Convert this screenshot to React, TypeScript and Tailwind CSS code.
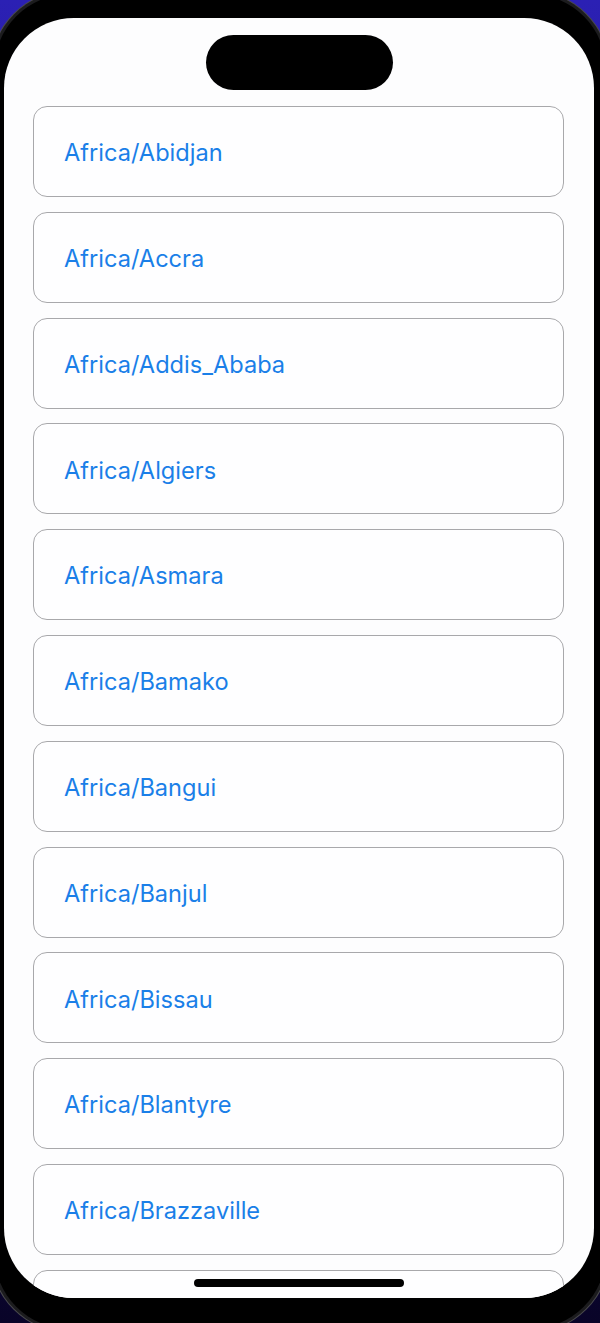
const zones = [
  "Africa/Abidjan",
  "Africa/Accra",
  "Africa/Addis_Ababa",
  "Africa/Algiers",
  "Africa/Asmara",
  "Africa/Bamako",
  "Africa/Bangui",
  "Africa/Banjul",
  "Africa/Bissau",
  "Africa/Blantyre",
  "Africa/Brazzaville",
];

function ZoneRow({ name }: { name?: string }) {
  return (
    <li className="h-[91px] shrink-0 mb-[14.8px] flex items-center pl-[30px] rounded-[14px] border border-[#a8a8ab] bg-[#fefeff]">
      {name && <span className="mt-[3px] text-[#1a7fe8] text-[23.6px] leading-none">{name}</span>}
    </li>
  );
}

export default function App() {
  return (
    <div className="w-[600px] h-[1323px] overflow-hidden bg-gradient-to-b from-[#2b20b4] via-[#1a1070] to-[#090428]">
      <div className="-m-[10px] w-[620px] h-[1343px] rounded-[80px] bg-[#4a4a4e] p-[1px]">
        <div className="w-full h-full rounded-[79px] bg-[#1c1c1e] p-[3px]">
          <div className="w-full h-full rounded-[76px] bg-black pt-[24px] pl-[10px] pr-[12px] pb-[31px]">
            <div
              className="relative w-full h-full rounded-[70px] bg-[#fdfdfe] overflow-hidden flex flex-col items-center"
              style={{ fontFamily: "Inter, Roboto, 'Noto Sans', sans-serif" }}
            >
              <div className="mt-[17px] w-[187px] h-[55px] shrink-0 rounded-full bg-black" />
              <ul className="mt-[16px] w-[531px] ml-[-1px] flex flex-col">
                {zones.map((z) => (
                  <ZoneRow key={z} name={z} />
                ))}
                <ZoneRow />
              </ul>
              <div className="absolute bottom-[11px] left-[190px] w-[210px] h-[8px] rounded-full bg-black" />
            </div>
          </div>
        </div>
      </div>
    </div>
  );
}
